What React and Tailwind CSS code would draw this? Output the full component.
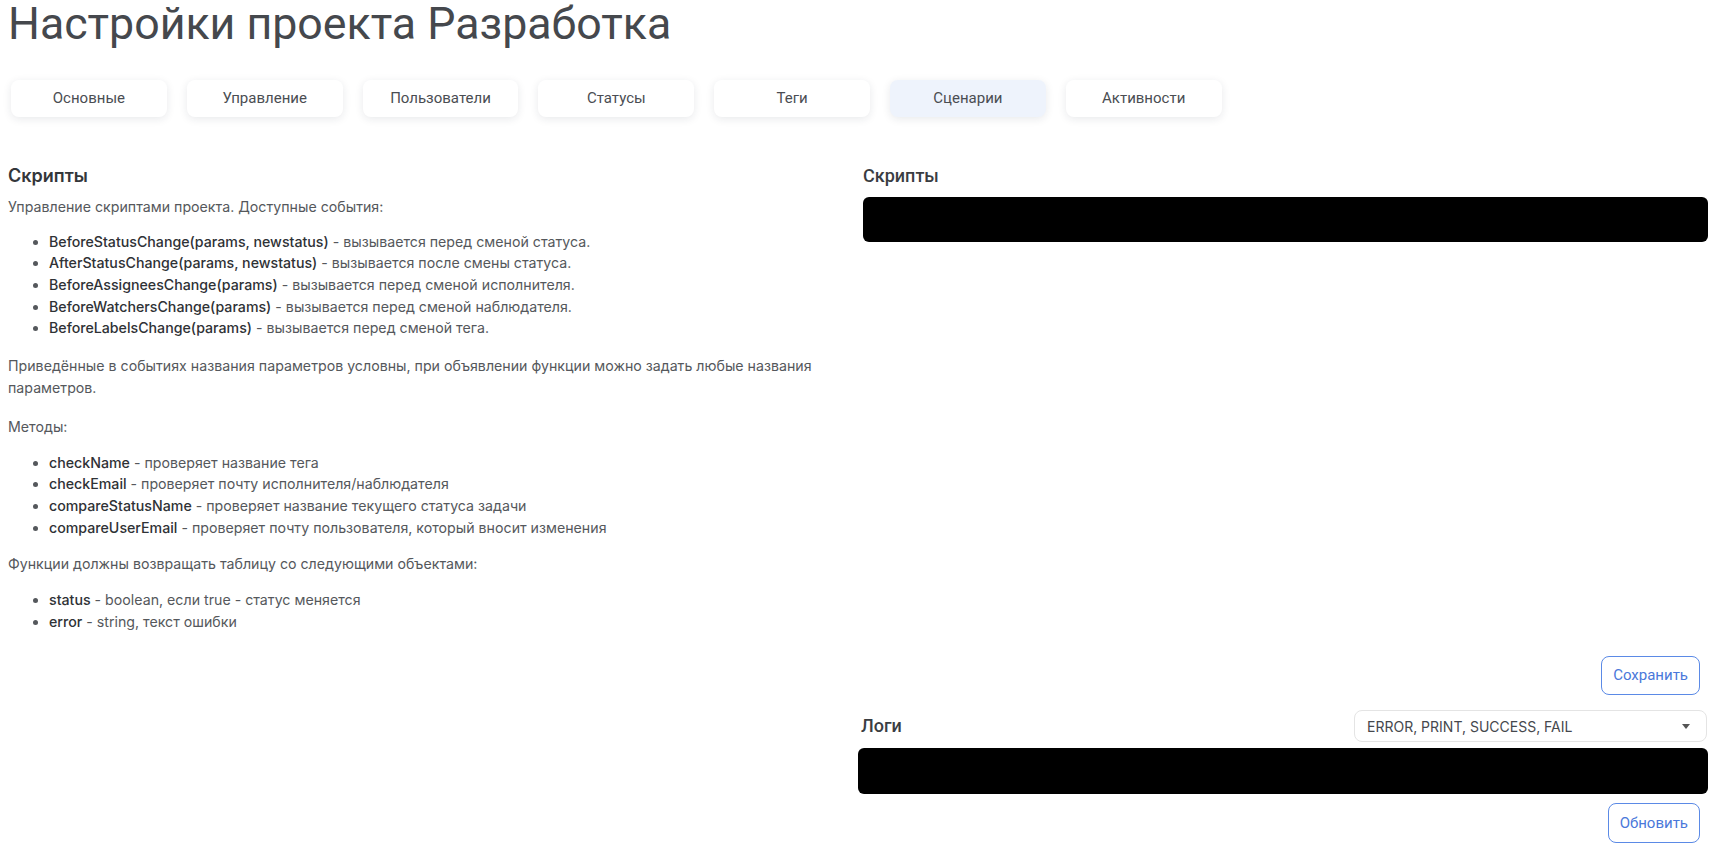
import React from "react";

const tabs = ["Основные", "Управление", "Пользователи", "Статусы", "Теги", "Сценарии", "Активности"];

const events = [
  ["BeforeStatusChange(params, newstatus)", " - вызывается перед сменой статуса."],
  ["AfterStatusChange(params, newstatus)", " - вызывается после смены статуса."],
  ["BeforeAssigneesChange(params)", " - вызывается перед сменой исполнителя."],
  ["BeforeWatchersChange(params)", " - вызывается перед сменой наблюдателя."],
  ["BeforeLabelsChange(params)", " - вызывается перед сменой тега."],
];

const methods = [
  ["checkName", " - проверяет название тега"],
  ["checkEmail", " - проверяет почту исполнителя/наблюдателя"],
  ["compareStatusName", " - проверяет название текущего статуса задачи"],
  ["compareUserEmail", " - проверяет почту пользователя, который вносит изменения"],
];

const returns = [
  ["status", " - boolean, если true - статус меняется"],
  ["error", " - string, текст ошибки"],
];

function List({ items, mb }) {
  return (
    <ul className={"list-disc pl-[41px] leading-[21.7px] " + mb}>
      {items.map(([b, t]) => (
        <li key={b}>
          <span className="font-medium text-[#2f3236]">{b}</span>
          {t}
        </li>
      ))}
    </ul>
  );
}

export default function App() {
  return (
    <div className="px-2 bg-white min-h-[855px] text-[#45484d] font-['Roboto',sans-serif]">
      <h1 className="text-[44.7px] leading-[48px] font-normal text-[#45484d]">Настройки проекта Разработка</h1>

      <div className="mt-8 ml-[3px] flex gap-5">
        {tabs.map((t) => (
          <div
            key={t}
            className={
              "w-[155.8px] h-[37px] rounded-lg flex items-center justify-center text-[15px] text-[#4a4d52] shadow-[0_2px_8px_rgba(30,40,60,0.10)] " +
              (t === "Сценарии" ? "bg-[#eef3fc]" : "bg-white")
            }
          >
            {t}
          </div>
        ))}
      </div>

      <div className="mt-[47px] grid grid-cols-2">
        <div className="font-['Inter',sans-serif] text-[14.2px] leading-[21.5px] text-[#55585c]">
          <h2 className="text-[18px] leading-[24px] font-semibold text-[#33363a] mb-2">Скрипты</h2>
          <p className="mb-[13px]">Управление скриптами проекта. Доступные события:</p>
          <List items={events} mb="mb-[16px]" />
          <p className="mb-[18px] pr-[20px]">
            Приведённые в событиях названия параметров условны, при объявлении функции можно задать любые названия параметров.
          </p>
          <p className="mb-[14px]">Методы:</p>
          <List items={methods} mb="mb-[15px]" />
          <p className="mb-[14px]">Функции должны возвращать таблицу со следующими объектами:</p>
          <List items={returns} mb="mb-[15px]" />
        </div>

        <div className="flex flex-col">
          <div className="pl-[5px]">
            <h2 className="text-[18px] leading-[24px] font-medium text-[#3a3d42]">Скрипты</h2>
            <div className="mt-[9px] h-[449px]">
              <div className="h-[45px] rounded-md bg-black"></div>
            </div>
          </div>
          <div className="mt-[10px] flex justify-end pr-2">
            <button className="h-[39px] px-[11px] rounded-lg border border-[#5b8ae6] text-[15px] text-[#4a78da] bg-white">
              Сохранить
            </button>
          </div>

          <div className="mt-[15px] flex items-center justify-between">
            <h2 className="pl-[3px] text-[18px] leading-[24px] font-medium text-[#3a3d42]">Логи</h2>
            <div className="w-[353px] h-[32px] mr-[1px] rounded-lg border border-[#e4e4e4] flex items-center justify-between pl-[12px] pr-[16px] font-['Inter',sans-serif] text-[14px] text-[#45484d]">
              <span>ERROR, PRINT, SUCCESS, FAIL</span>
              <svg width="8" height="5" viewBox="0 0 8 5">
                <path d="M0 0 L8 0 L4 5 Z" fill="#555" />
              </svg>
            </div>
          </div>
          <div className="mt-[6px] h-[46px] rounded-md bg-black"></div>
          <div className="mt-[9px] flex justify-end pr-2">
            <button className="h-[40px] px-[11px] rounded-lg border border-[#5b8ae6] text-[15px] text-[#4a78da] bg-white">
              Обновить
            </button>
          </div>
        </div>
      </div>
    </div>
  );
}
